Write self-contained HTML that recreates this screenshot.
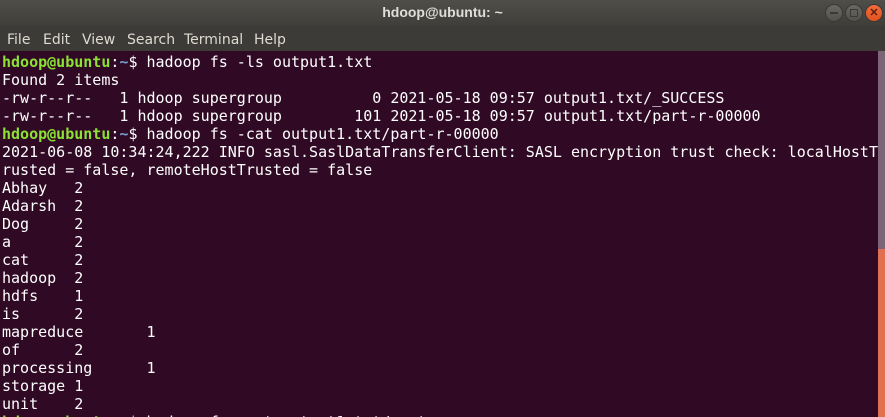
<!DOCTYPE html>
<html><head><style>
html,body{margin:0;padding:0;width:885px;height:417px;overflow:hidden;background:#300a24}
#wrap{position:relative;width:885px;height:417px;overflow:hidden}
#title{position:absolute;left:0;top:0;width:885px;height:26px;background:linear-gradient(#504e49,#3f3e3a);color:#e0ded8;font:bold 14px "Liberation Sans",sans-serif;text-align:center;line-height:25px}
#menu{position:absolute;left:0;top:26px;width:885px;height:25px;background:#3c3b37;color:#dfdbd2;font:14px "DejaVu Sans","Liberation Sans",sans-serif;line-height:28px}
#menu span{position:absolute}
.b{position:absolute;top:4px;width:16px;height:16px;border-radius:50%;background:linear-gradient(#6a6964,#52514d);border:1px solid #3a3935}
#term{position:absolute;left:2px;top:53px;margin:0;font:15px "DejaVu Sans Mono","Liberation Mono",monospace;line-height:18px;color:#ffffff;white-space:pre;tab-size:8}
.g{color:#8ae234;font-weight:bold}.u{color:#729fcf;font-weight:bold}
#sb1{position:absolute;left:878px;top:51px;width:7px;height:198px;background:#7b6577}
#sb2{position:absolute;left:878px;top:249px;width:7px;height:168px;background:#e07050}
</style></head><body><div id="wrap">
<div id="title">hdoop@ubuntu: ~</div>
<div class="b" style="left:825px"><div style="position:absolute;left:4px;top:7px;width:8px;height:2px;background:#3a3935"></div></div>
<div class="b" style="left:845px"><div style="position:absolute;left:4px;top:4px;width:6px;height:6px;border:1px solid #3a3935"></div></div>
<div class="b" style="left:865px;background:linear-gradient(#f26b3a,#e2531f);color:#5a2010;font:bold 11px sans-serif;text-align:center;line-height:16px">✕</div>
<div id="menu"><span style="left:7px">File</span><span style="left:43px">Edit</span><span style="left:82px">View</span><span style="left:127px">Search</span><span style="left:184px">Terminal</span><span style="left:254px">Help</span></div>
<pre id="term"><span class="g">hdoop@ubuntu</span>:<span class="u">~</span>$ hadoop fs -ls output1.txt
Found 2 items
-rw-r--r--   1 hdoop supergroup          0 2021-05-18 09:57 output1.txt/_SUCCESS
-rw-r--r--   1 hdoop supergroup        101 2021-05-18 09:57 output1.txt/part-r-00000
<span class="g">hdoop@ubuntu</span>:<span class="u">~</span>$ hadoop fs -cat output1.txt/part-r-00000
2021-06-08 10:34:24,222 INFO sasl.SaslDataTransferClient: SASL encryption trust check: localHostT
rusted = false, remoteHostTrusted = false
Abhay	2
Adarsh	2
Dog	2
a	2
cat	2
hadoop	2
hdfs	1
is	2
mapreduce	1
of	2
processing	1
storage	1
unit	2
<span class="g">hdoop@ubuntu</span>:<span class="u">~</span>$ hadoop fs -cat output1.txt/part</pre>
<div id="sb1"></div><div id="sb2"></div>
</div></body></html>
